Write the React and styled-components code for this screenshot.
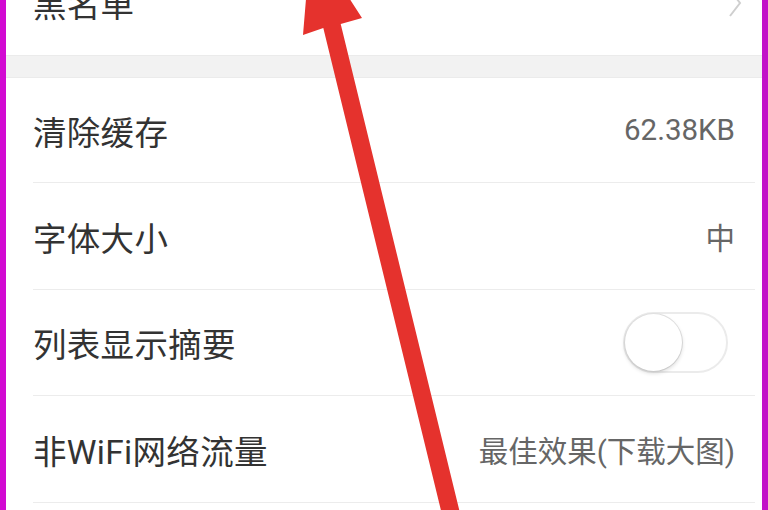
import React, { useState } from 'react';
import styled, { createGlobalStyle } from 'styled-components';

const GlobalStyle = createGlobalStyle`
  html, body {
    margin: 0;
    padding: 0;
    background: #fff;
    overflow: hidden;
  }
  body {
    font-family: Roboto, "Noto Sans CJK SC", sans-serif;
  }
`;

const Frame = styled.div`
  position: relative;
  width: 768px;
  height: 510px;
  overflow: hidden;
  box-sizing: border-box;
  border-left: 6px solid #d20ad2;
  border-right: 6px solid #c212c8;
  background: #fff;
`;

const Screen = styled.div`
  display: flex;
  flex-direction: column;
  margin-top: -50px;
`;

const Row = styled.div`
  display: flex;
  align-items: center;
  justify-content: space-between;
  height: ${p => p.$h || 106}px;
  margin-left: 27px;
  margin-right: 7px;
  padding-right: 20px;
  box-sizing: border-box;
  border-bottom: ${p => (p.$last ? 'none' : '1.5px solid #ececec')};
`;

const Label = styled.span`
  font-family: Roboto, "Noto Sans CJK SC", sans-serif;
  font-size: 33.5px;
  color: #333;
  letter-spacing: 0.3px;
`;

const Value = styled.span`
  font-family: Roboto, "Noto Sans CJK SC", sans-serif;
  font-size: 29.5px;
  color: #666;
`;

const GroupGap = styled.div`
  height: 21px;
  background: #f2f2f2;
  border-top: 1px solid #ebebeb;
  border-bottom: 1px solid #ebebeb;
`;

const Chevron = styled.svg`
  width: 16px;
  height: 30px;
  margin-right: -8px;
`;

const Track = styled.button`
  position: relative;
  width: 105px;
  height: 61px;
  padding: 0;
  border-radius: 31px;
  border: 2px solid #ebebeb;
  background: ${p => (p.$on ? '#4cd964' : '#fff')};
  cursor: pointer;
  margin-right: 7px;
`;

const Knob = styled.span`
  position: absolute;
  top: 0;
  left: ${p => (p.$on ? '44px' : '0')};
  width: 57px;
  height: 57px;
  border-radius: 50%;
  background: #fff;
  box-shadow: 0 2px 4px rgba(0, 0, 0, 0.16), 0 0 0 1px #e4e4e4;
`;

const Arrow = styled.svg`
  position: absolute;
  left: -6px;
  top: 0;
  width: 768px;
  height: 510px;
  pointer-events: none;
`;

function App() {
  const [summary, setSummary] = useState(false);

  return (
    <>
      <GlobalStyle />
      <Frame>
        <Screen>
          <Row $h={105} $last>
            <Label>黑名单</Label>
            <Chevron viewBox="0 0 16 30">
              <path d="M3 2 L13 15 L3 28" fill="none" stroke="#cfcfcf" strokeWidth="2" />
            </Chevron>
          </Row>
          <GroupGap />
          <Row $h={105}>
            <Label>清除缓存</Label>
            <Value>62.38KB</Value>
          </Row>
          <Row $h={107}>
            <Label>字体大小</Label>
            <Value>中</Value>
          </Row>
          <Row $h={106}>
            <Label>列表显示摘要</Label>
            <Track $on={summary} onClick={() => setSummary(v => !v)}>
              <Knob $on={summary} />
            </Track>
          </Row>
          <Row $h={107}>
            <Label>非WiFi网络流量</Label>
            <Value>最佳效果(下载大图)</Value>
          </Row>
          <Row $h={106} $last />
        </Screen>
        <Arrow viewBox="0 0 768 510">
          <polygon
            points="443.8,522 323.3,28 303,35 311,-61 362,18 340.7,24 461.2,518"
            fill="#e5322d"
          />
        </Arrow>
      </Frame>
    </>
  );
}

export default App;
